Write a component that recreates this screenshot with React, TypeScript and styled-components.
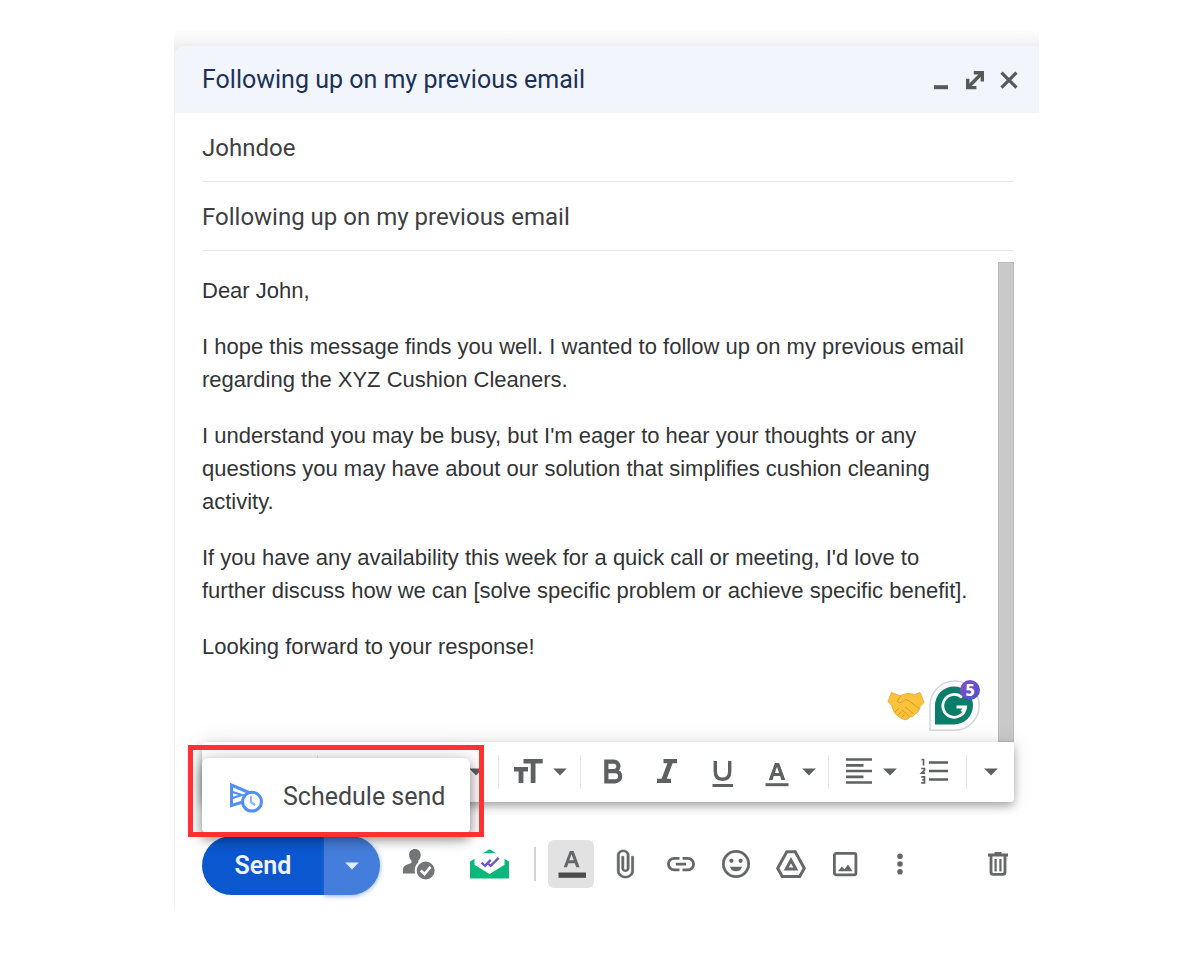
import React from 'react';
import styled, { createGlobalStyle } from 'styled-components';
import { Undo2, Redo2 } from 'lucide-react';

const ink = '#5f6061';
const blue = '#0b57d0';

const GlobalStyle = createGlobalStyle`
  *, *::before, *::after { box-sizing: border-box; }
  body { margin: 0; background: #fff; }
  button, input { font: inherit; color: inherit; border: 0; padding: 0; margin: 0; background: none; }
  button { cursor: pointer; }
  svg { display: block; flex: none; overflow: visible; }
`;

const Page = styled.main`
  padding: 30px 161px 52px 174px;
  font-family: Roboto, sans-serif;
  color: #3e4043;
`;

const Backdrop = styled.div`
  padding-top: 16px;
  background: linear-gradient(#fefefe, #f9f9f9 8px, #efefef 16px, #f6f6f6 50px, #fff 60px);
`;

const Compose = styled.section`
  border-left: 1px solid #f1f1f1;
  border-top-left-radius: 12px;
  background: #fff;
`;

const TitleBar = styled.header`
  display: flex;
  align-items: center;
  justify-content: space-between;
  height: 67px;
  padding: 0 13px 0 27px;
  border-top-left-radius: 12px;
  background: #f2f5fc;
`;

const Title = styled.h1`
  margin: 0;
  font-size: 25px;
  font-weight: 400;
  line-height: 32px;
  color: #1b3157;
`;

const WindowButtons = styled.div`
  display: flex;
`;

const WindowButton = styled.button`
  display: grid;
  place-items: center;
  width: 34px;
  height: 34px;
  color: #58595b;
`;

const Content = styled.div`
  padding: 0 25px 0 27px;
`;

const Field = styled.input`
  display: block;
  width: 100%;
  height: 69px;
  border-bottom: 1px solid #e4e8e8;
  border-radius: 0;
  outline: none;
  font-size: 24px;

  && { padding-top: 2px; }
`;

const BodyArea = styled.div`
  display: flex;
  margin-top: 11px;
`;

const BodyColumn = styled.div`
  display: flex;
  flex: 1;
  flex-direction: column;
  justify-content: space-between;
  gap: 17px;
  min-width: 0;
  padding: 12px 18px 11px 0;
`;

const Message = styled.div`
  outline: none;
  font-family: 'Liberation Sans', Arial, sans-serif;
  font-size: 22px;
  line-height: 33px;
  color: #333436;
`;

const Paragraph = styled.p`
  margin: 0 0 23px;
  &:last-child { margin-bottom: 0; }
`;

const ScrollThumb = styled.div`
  width: 16px;
  background: #c9c9c9;
  border: 1px solid #bdbdbd;
`;

const Assistants = styled.div`
  display: flex;
  align-items: center;
  align-self: flex-end;
  gap: 4px;
`;

const AssistantButton = styled.button`
  position: relative;
`;

const Badge = styled.span`
  position: absolute;
  top: 0;
  right: 0;
  display: grid;
  place-items: center;
  width: 20px;
  height: 20px;
  border-radius: 50%;
  background: linear-gradient(135deg, #8a4fc0, #4650d8);
  color: #fff;
  font-family: 'Noto Sans', sans-serif;
  font-size: 16px;
  font-weight: 800;
  line-height: 20px;
`;

const FormatBar = styled.div`
  position: relative;
  display: flex;
  align-items: center;
  height: 60px;
  border-radius: 4px;
  background: #fff;
  color: ${ink};
  box-shadow: 0 0 22px rgba(0, 0, 0, 0.1), 0 4px 9px rgba(0, 0, 0, 0.3);
`;

const Group = styled.div<{ $gap?: number; $left?: number; $right?: number }>`
  display: flex;
  align-items: center;
  gap: ${(p) => p.$gap ?? 0}px;
  padding: 0 ${(p) => p.$right ?? 0}px 0 ${(p) => p.$left ?? 0}px;
`;

const Separator = styled.span`
  width: 1px;
  height: 34px;
  background: #e3e6e6;
`;

const ToolButton = styled.button`
  display: flex;
  align-items: center;
  justify-content: center;
  min-width: 40px;
  height: 40px;
`;

const FontButton = styled(ToolButton)`
  flex: 1;
  justify-content: flex-end;

  && { padding-right: 10px; }
`;

const MoreFormats = styled(ToolButton)`
  width: 47px;
`;

const ActionBar = styled.footer`
  position: relative;
  display: flex;
  align-items: flex-start;
  margin-top: 13px;
  padding: 21px 0 13px;
  border-right: 1px solid #fcfcfc;
  background: #fff;
  color: #666768;
`;

const SendGroup = styled.div`
  position: relative;
  display: flex;
  width: 178px;
  height: 59px;
  margin-right: 16px;
`;

const SendButton = styled.button`
  width: 122px;
  border-radius: 30px 0 0 30px;
  background: ${blue};
  color: #eef4ff;

  && {
    font-size: 25px;
    font-weight: 600;
  }
`;

const SendOptions = styled.button`
  display: grid;
  flex: 1;
  place-items: center;
  border-radius: 0 30px 30px 0;
  background: #447ddb;
  color: #e3edfd;
  box-shadow: 0 1px 5px rgba(68, 125, 219, 0.6);
`;

const Menu = styled.div`
  position: absolute;
  left: 0;
  bottom: calc(100% + 2px);
  width: 268px;
  border-radius: 6px;
  background: #fff;
  box-shadow: 0 0 26px rgba(0, 0, 0, 0.12), 0 5px 12px rgba(0, 0, 0, 0.45);
`;

const MenuItem = styled.button`
  display: flex;
  align-items: center;
  gap: 19px;
  width: 100%;
  height: 76px;
  white-space: nowrap;

  && {
    padding: 0 26px;
    color: #444649;
    font-size: 25px;
  }
`;

const Highlight = styled.div`
  position: absolute;
  inset: -13px -14px -3px;
  border: 5px solid #ff3131;
  pointer-events: none;
`;

const Actions = styled.div<{ $gap: number }>`
  display: flex;
  align-items: center;
  gap: ${(p) => p.$gap}px;
  height: 56px;
`;

const ActionButton = styled.button<{ $active?: boolean }>`
  display: grid;
  place-items: center;
  width: 46px;
  height: 48px;
  border-radius: 6px;
  background: ${(p) => (p.$active ? '#e2e2e2' : 'transparent')};
`;

const ActionSeparator = styled.span`
  width: 2px;
  height: 34px;
  margin-right: 12px;
  background: #d4d4d4;
`;

const DeleteSlot = styled(Actions)`
  margin-left: auto;
`;

const DeleteButton = styled(ActionButton)`
  width: 31px;
`;

const Icon = ({ size = 40, children }: { size?: number; children: React.ReactNode }) => (
  <svg width={size} height={size} viewBox={`0 0 ${size} ${size}`} fill="currentColor" aria-hidden="true">
    {children}
  </svg>
);

const Caret = () => (
  <Icon size={24}>
    <path d="M5.2 8.400h13.600L12 15.400z" />
  </Icon>
);

const line = (width: number) => ({ fill: 'none', stroke: 'currentColor', strokeWidth: width });

const TextSizeIcon = () => (
  <Icon>
    <path d="M15.5 7h19.2v4.6h-7.2V31h-4.8V11.6h-7.2z" />
    <path d="M6 15h14v4.4h-4.6V31h-4.8V19.4H6z" />
  </Icon>
);

const BoldIcon = () => (
  <Icon>
    <path d="M14.3 9.6h7.400a4.700 4.700 0 0 1 0 9.500h-7.400zM14.300 19.100h8.800a5 5 0 0 1 0 10.200h-8.800z" {...line(4.2)} />
  </Icon>
);

const ItalicIcon = () => (
  <Icon>
    <path d="M16.5 7H30v4.3h-4.4l-5.800 15.500H24V31H10v-4.200h4.600l5.800-15.500h-3.900z" />
  </Icon>
);

const UnderlineIcon = () => (
  <Icon>
    <path d="M13.3 9v10.500c0 5 2.700 7.700 7.200 7.700s7.200-2.700 7.200-7.700V9" {...line(3.4)} />
    <path d="M10.500 32H31v3H10.500z" />
  </Icon>
);

const TextColorIcon = () => (
  <Icon>
    <path d="M17.900 11h4.200l6.200 17h-3.900l-1.300-3.900h-6.300L15.500 28h-3.800zm-.1 10h4.300L20 14.700z" fillRule="evenodd" />
    <path d="M8.500 31.200h23v3h-23z" />
  </Icon>
);

const AlignIcon = () => (
  <Icon>
    <path d="M8 7.500h26M8 13.300h17.500M8 19h26M8 24.800h17.500M8 30.500h26" {...line(2.700)} />
  </Icon>
);

const ListIcon = () => (
  <Icon>
    <path d="M15 10.500h19M15 19h19M15 27.500h19" {...line(2.700)} />
    <path d="M7.500 7.500h2v6M7.200 16.500h3.300v1.600l-3 3.100h3.700M7.200 24.800h3.300v6H7.200M8.300 27.800h2.200" {...line(1.700)} />
  </Icon>
);

const FormattingIcon = () => (
  <Icon>
    <path d="M18.800 7h3.800l6 16.200h-3.400l-1.300-3.900h-6.500l-1.400 3.900h-3.300zm-.5 9.300h4.500l-2.200-6z" fillRule="evenodd" />
    <path d="M7.500 28.500h27.500v5.300H7.500z" fill="#4c4c4c" />
  </Icon>
);

const ClipIcon = () => (
  <Icon>
    <path
      transform="translate(0.700 4.600) scale(1.500 1.280)"
      d="M16.500 6v11.500c0 2.210-1.790 4-4 4s-4-1.790-4-4V5c0-1.380 1.120-2.500 2.500-2.500s2.500 1.120 2.500 2.500v10.500c0 .55-.45 1-1 1s-1-.45-1-1V6H10v9.500c0 1.380 1.120 2.500 2.500 2.500s2.500-1.120 2.500-2.500V5c0-2.210-1.790-4-4-4S7 2.790 7 5v12.500c0 3.040 2.460 5.500 5.500 5.500s5.500-2.460 5.500-5.500V6h-1.500z"
      stroke="currentColor"
      strokeWidth="0.400"
    />
  </Icon>
);

const LinkIcon = () => (
  <Icon>
    <path d="M18.500 14.300h-5.300a5.800 5.800 0 0 0 0 11.600h5.300M21.500 14.300h5.300a5.800 5.800 0 0 1 0 11.600h-5.300M14.800 20.100h10.400" {...line(2.800)} />
  </Icon>
);

const EmojiIcon = () => (
  <Icon>
    <circle cx="20" cy="20" r="12.600" {...line(2.800)} />
    <circle cx="15.400" cy="16.800" r="2.100" />
    <circle cx="24.600" cy="16.800" r="2.100" />
    <path d="M13.800 22.700h12.400c-1 2.900-3.400 4.600-6.200 4.600s-5.200-1.700-6.200-4.600z" />
  </Icon>
);

const DriveIcon = () => (
  <Icon>
    <path d="M15.800 7.800h8.400l9.100 16.500-4.600 8.100H11.300l-4.600-8.100z" {...line(3)} />
    <path d="M20 16.200l4.800 8.700h-9.600z" {...line(3)} />
  </Icon>
);

const ImageIcon = () => (
  <Icon>
    <rect x="8.400" y="9.400" width="21.500" height="21.500" rx="1.800" {...line(2.800)} />
    <path d="M12 27.200l3.800-4.600 2.600 2.700 3.600-4.700 4.500 6.600z" />
  </Icon>
);

const MoreIcon = () => (
  <Icon>
    <circle cx="19" cy="12.200" r="2.800" />
    <circle cx="19" cy="20" r="2.800" />
    <circle cx="19" cy="27.800" r="2.800" />
  </Icon>
);

const TrashIcon = () => (
  <Icon size={32}>
    <path d="M12.500 4h7v1.600h6.500v2.800H6V5.600h6.500z" />
    <path d="M9 8v16.200c0 1.300.8 2.200 2.200 2.200h9.600c1.400 0 2.200-.9 2.200-2.200V8" {...line(2.800)} />
    <path d="M13.600 11v12.500M18.400 11v12.500" {...line(2.200)} />
  </Icon>
);

const ContactCheckIcon = () => (
  <Icon>
    <g fill="#747577">
      <path d="M15.900 5c3.500 0 5.800 2.500 5.800 6 0 2.300-1 4.300-2.400 5.400v2.200c0 1.300 6.700 2 6.700 6.900v4H4v-4.300c0-4.800 8.500-5.200 8.500-6.600v-2.200c-1.400-1.100-2.400-3.100-2.400-5.400 0-3.500 2.300-6 5.800-6z" />
      <circle cx="26.700" cy="26.500" r="10" stroke="#fff" strokeWidth="2" />
    </g>
    <path d="M21.800 26.500l3.700 3.600 6-7.300" fill="none" stroke="#fff" strokeWidth="2.600" />
  </Icon>
);

const TrackerIcon = () => (
  <Icon>
    <path d="M12 11l9.500-5.700L31 11z" fill="#0cb77b" />
    <path d="M2 17.500l6-3.500h27l6 3.500v17H2z" fill="#0cb77b" />
    <path d="M6.500 9.300h30v11.500l-15 9.200-15-9.200z" fill="#fff" />
    <path d="M13.500 18.600l3.600 3.300 5.600-6M20.500 20l2.200 1.900 8-8" fill="none" stroke="#6a55cf" strokeWidth="2.300" />
  </Icon>
);

const MinimizeIcon = () => (
  <Icon size={24}>
    <path d="M5 17.200h14v4H5z" />
  </Icon>
);

const ExpandIcon = () => (
  <Icon size={24}>
    <path d="M10.800 3H21v10.400h-3.400V9L8.800 17.900h4.600v3.300H3V10.800h3.400v4.600l8.900-9h-4.500z" />
  </Icon>
);

const CloseIcon = () => (
  <Icon size={24}>
    <path d="M4.500 4.700l15 15M19.500 4.700l-15 15" {...line(3.200)} />
  </Icon>
);

const ScheduleIcon = () => (
  <svg width="36" height="32" viewBox="0 0 36 32" fill="none" stroke="#4f8ff7" strokeWidth="3" aria-hidden="true">
    <path d="M14 22.300L3.500 25.500V5l18.500 8" />
    <path d="M4 11.800l9.500 3.200L4 18.200" strokeWidth="2.200" />
    <circle cx="24" cy="21.700" r="9.400" fill="#fff" />
    <path d="M23 16.200v6l4.200 3" strokeWidth="2.200" stroke="#86b3fa" />
  </svg>
);

const HandshakeIcon = () => (
  <svg width="38" height="30" viewBox="0 0 38 30" aria-hidden="true">
    <path
      d="M1 10.500L4.500 1.500l8.500 3.300c3-.8 5-2.400 9-2.400l5.500 1.400L33 1.500 37 11.500l-4 4c-.3 4-2.200 6.500-5 7.200-1 2.400-3 3.200-5 3.100-1.300 2.200-4 3.300-6 2.700-3.500-1.300-6.700-4-9.500-6.500L4.500 14z"
      fill="#fbc23c"
      stroke="#f0ad33"
    />
    <path d="M14 5c-2 2-3.500 4-3.300 6 2.500 1.500 5.500 0 7.300-2.500 2.500.8 5 1.500 7 3.500l7 5.500M18 16l8.500 6.500M15 19l7 6M8 21l3.500-3.500M11 24l3.500-3.500M14.500 26.500l3-3" fill="none" stroke="#e09a2a" />
  </svg>
);

const GrammarIcon = () => (
  <svg width="51" height="51" viewBox="0 0 51 51" aria-hidden="true">
    <path d="M1 50.200V25.600A24.600 24.600 0 1 1 25.600 50.200z" fill="#fff" stroke="#d3d7e0" strokeWidth="1.500" />
    <path d="M6 44.500V25.600a19 19 0 1 1 19 18.900z" fill="#0a7d6b" />
    <path d="M33 17.500a11.400 11.400 0 1 0 3.600 9.500H27.500M32.500 31.500l4-4" fill="none" stroke="#fff" strokeWidth="2.800" />
  </svg>
);

const paragraphs = [
  'Dear John,',
  'I hope this message finds you well. I wanted to follow up on my previous email regarding the XYZ Cushion Cleaners.',
  "I understand you may be busy, but I'm eager to hear your thoughts or any questions you may have about our solution that simplifies cushion cleaning activity.",
  "If you have any availability this week for a quick call or meeting, I'd love to further discuss how we can [solve specific problem or achieve specific benefit].",
  'Looking forward to your response!',
];

const inserts = [
  { label: 'Attach files', Glyph: ClipIcon },
  { label: 'Insert link', Glyph: LinkIcon },
  { label: 'Insert emoji', Glyph: EmojiIcon },
  { label: 'Insert files using Drive', Glyph: DriveIcon },
  { label: 'Insert photo', Glyph: ImageIcon },
  { label: 'More options', Glyph: MoreIcon },
];

export default function App() {
  return (
    <>
      <GlobalStyle />
      <Page>
        <Backdrop>
          <Compose>
            <TitleBar>
              <Title>Following up on my previous email</Title>
              <WindowButtons>
                <WindowButton aria-label="Minimize"><MinimizeIcon /></WindowButton>
                <WindowButton aria-label="Full screen"><ExpandIcon /></WindowButton>
                <WindowButton aria-label="Close"><CloseIcon /></WindowButton>
              </WindowButtons>
            </TitleBar>
            <Content>
              <Field aria-label="To" defaultValue="Johndoe" />
              <Field aria-label="Subject" defaultValue="Following up on my previous email" />
              <BodyArea>
                <BodyColumn>
                  <Message role="textbox" aria-label="Message body" aria-multiline="true" contentEditable suppressContentEditableWarning spellCheck={false}>
                    {paragraphs.map((text) => <Paragraph key={text}>{text}</Paragraph>)}
                  </Message>
                  <Assistants>
                    <AssistantButton aria-label="Tone"><HandshakeIcon /></AssistantButton>
                    <AssistantButton aria-label="Writing suggestions">
                      <GrammarIcon />
                      <Badge>5</Badge>
                    </AssistantButton>
                  </Assistants>
                </BodyColumn>
                <ScrollThumb />
              </BodyArea>
              <FormatBar role="toolbar" aria-label="Formatting">
                <Group $left={17} $right={18}>
                  <ToolButton aria-label="Undo"><Undo2 size={20} /></ToolButton>
                  <ToolButton aria-label="Redo"><Redo2 size={20} /></ToolButton>
                </Group>
                <Separator />
                <FontButton aria-label="Font"><Caret /></FontButton>
                <Separator />
                <Group $left={9} $right={8}>
                  <ToolButton aria-label="Size"><TextSizeIcon /><Caret /></ToolButton>
                </Group>
                <Separator />
                <Group $gap={15} $left={11} $right={7}>
                  <ToolButton aria-label="Bold"><BoldIcon /></ToolButton>
                  <ToolButton aria-label="Italic"><ItalicIcon /></ToolButton>
                  <ToolButton aria-label="Underline"><UnderlineIcon /></ToolButton>
                  <ToolButton aria-label="Text color"><TextColorIcon /><Caret /></ToolButton>
                </Group>
                <Separator />
                <Group $gap={12} $left={9} $right={12}>
                  <ToolButton aria-label="Align"><AlignIcon /><Caret /></ToolButton>
                  <ToolButton aria-label="Numbered list"><ListIcon /></ToolButton>
                </Group>
                <Separator />
                <MoreFormats aria-label="More formatting options"><Caret /></MoreFormats>
              </FormatBar>
              <ActionBar>
                <SendGroup>
                  <SendButton>Send</SendButton>
                  <SendOptions aria-label="More send options"><Caret /></SendOptions>
                  <Menu>
                    <MenuItem><ScheduleIcon />Schedule send</MenuItem>
                    <Highlight />
                  </Menu>
                </SendGroup>
                <Actions $gap={23}>
                  <ActionButton aria-label="Verify contact"><ContactCheckIcon /></ActionButton>
                  <ActionButton aria-label="Email tracking"><TrackerIcon /></ActionButton>
                  <ActionSeparator />
                </Actions>
                <Actions $gap={9}>
                  <ActionButton $active aria-label="Formatting options" aria-pressed="true"><FormattingIcon /></ActionButton>
                  {inserts.map(({ label, Glyph }) => (
                    <ActionButton key={label} aria-label={label}><Glyph /></ActionButton>
                  ))}
                </Actions>
                <DeleteSlot $gap={0}>
                  <DeleteButton aria-label="Discard draft"><TrashIcon /></DeleteButton>
                </DeleteSlot>
              </ActionBar>
            </Content>
          </Compose>
        </Backdrop>
      </Page>
    </>
  );
}
